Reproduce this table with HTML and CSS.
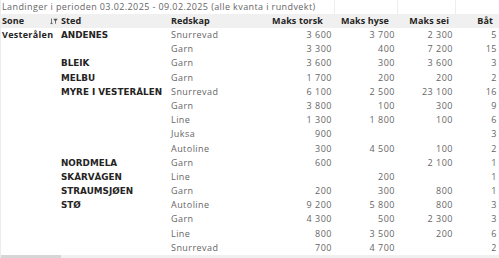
FILE: index.html
```html
<!DOCTYPE html>
<html lang="no">
<head>
<meta charset="utf-8">
<link rel="stylesheet" href="styles.css">
</head>
<body>
<div class="frame">
  <div class="grid title-row">
    <div class="title">Landinger i perioden 03.02.2025 - 09.02.2025 (alle kvanta i rundvekt)</div>
    <div class="tcell"></div>
    <div class="tcell"></div>
    <div class="tcell"></div>
  </div>
  <div class="grid head">
    <div class="h sone"><span>Sone</span>
      <svg class="filt" width="8" height="7" viewBox="0 0 8 7"><path d="M1.5 0.5v5.5M0.3 4.8l1.2 1.3 1.2-1.3" fill="none" stroke="#555" stroke-width="0.8"/><path d="M3.3 0.8h4.4L5.9 3.2v2.8L5.1 5.4V3.2z" fill="#555"/></svg>
    </div>
    <div class="h">Sted</div>
    <div class="h">Redskap</div>
    <div class="h num p-t">Maks torsk</div>
    <div class="h num p-h">Maks hyse</div>
    <div class="h num p-s">Maks sei</div>
    <div class="h num p-b">Båt</div>
  </div>
  <div class="grid body">
    <div class="z">Vesterålen</div><div class="s">ANDENES</div><div class="r">Snurrevad</div><div class="n">3 600</div><div class="n">3 700</div><div class="n">2 300</div><div class="n">5</div>
    <div></div><div></div><div class="r">Garn</div><div class="n">3 300</div><div class="n">400</div><div class="n">7 200</div><div class="n">15</div>
    <div></div><div class="s">BLEIK</div><div class="r">Garn</div><div class="n">3 600</div><div class="n">300</div><div class="n">3 600</div><div class="n">3</div>
    <div></div><div class="s">MELBU</div><div class="r">Garn</div><div class="n">1 700</div><div class="n">200</div><div class="n">200</div><div class="n">2</div>
    <div></div><div class="s">MYRE I VESTERÅLEN</div><div class="r">Snurrevad</div><div class="n">6 100</div><div class="n">2 500</div><div class="n">23 100</div><div class="n">16</div>
    <div></div><div></div><div class="r">Garn</div><div class="n">3 800</div><div class="n">100</div><div class="n">300</div><div class="n">9</div>
    <div></div><div></div><div class="r">Line</div><div class="n">1 300</div><div class="n">1 800</div><div class="n">100</div><div class="n">6</div>
    <div></div><div></div><div class="r">Juksa</div><div class="n">900</div><div class="n"></div><div class="n"></div><div class="n">3</div>
    <div></div><div></div><div class="r">Autoline</div><div class="n">300</div><div class="n">4 500</div><div class="n">100</div><div class="n">2</div>
    <div></div><div class="s">NORDMELA</div><div class="r">Garn</div><div class="n">600</div><div class="n"></div><div class="n">2 100</div><div class="n">1</div>
    <div></div><div class="s">SKÅRVÅGEN</div><div class="r">Line</div><div class="n"></div><div class="n">200</div><div class="n"></div><div class="n">1</div>
    <div></div><div class="s">STRAUMSJØEN</div><div class="r">Garn</div><div class="n">200</div><div class="n">300</div><div class="n">800</div><div class="n">1</div>
    <div></div><div class="s">STØ</div><div class="r">Autoline</div><div class="n">9 200</div><div class="n">5 800</div><div class="n">800</div><div class="n">3</div>
    <div></div><div></div><div class="r">Garn</div><div class="n">4 300</div><div class="n">500</div><div class="n">2 300</div><div class="n">3</div>
    <div></div><div></div><div class="r">Line</div><div class="n">800</div><div class="n">3 500</div><div class="n">200</div><div class="n">6</div>
    <div></div><div></div><div class="r">Snurrevad</div><div class="n">700</div><div class="n">4 700</div><div class="n"></div><div class="n">2</div>
  </div>
  <div class="scrollbar"><div class="thumb"></div></div>
</div>
</body>
</html>
```
FILE: styles.css
```css
html, body {
  margin: 0;
  padding: 0;
  background: #ffffff;
}
body {
  width: 499px;
  height: 258px;
  overflow: hidden;
  font-family: "Open Sans", "Liberation Sans", sans-serif;
  font-size: 9px;
  color: #605e5c;
}
.frame {
  position: relative;
  height: 258px;
  border-left: 1px solid #ececec;
  box-sizing: border-box;
}
.grid {
  display: grid;
  grid-template-columns: 58px 110px 100px 65px 63px 58px 44px;
}
.title-row {
  height: 14px;
}
.title {
  grid-column: 1 / span 4;
  line-height: 14px;
  padding-left: 1px;
  color: #666666;
  white-space: nowrap;
  letter-spacing: 0.4px;
}
.tcell {
  border-left: 1px solid #ededed;
}
.head {
  height: 14px;
  background: #f0f0f0;
}
.h {
  line-height: 14px;
  font-weight: 700;
  color: #252423;
  padding-left: 2px;
  white-space: nowrap;
  letter-spacing: 0.1px;
}
.sone {
  display: flex;
  align-items: center;
  justify-content: space-between;
  padding-left: 1px;
  padding-right: 1px;
}
.num {
  text-align: right;
  padding-left: 0;
}
.p-t { padding-right: 11px; }
.p-h { padding-right: 8px; }
.p-s { padding-right: 6px; }
.p-b { padding-right: 6px; }
.body {
  grid-auto-rows: 14.2px;
}
.body > div {
  line-height: 14.2px;
  white-space: nowrap;
}
.z {
  font-weight: 700;
  color: #252423;
  padding-left: 1px;
  letter-spacing: 0.3px;
}
.s {
  font-family: "DejaVu Sans", "Open Sans", sans-serif;
  font-size: 8.8px;
  font-weight: 700;
  color: #252423;
  padding-left: 2px;
}
.r {
  padding-left: 2px;
  color: #666666;
  letter-spacing: 0.45px;
}
.n {
  text-align: right;
  padding-right: 2px;
  color: #666666;
  letter-spacing: 0.5px;
}
.scrollbar {
  position: absolute;
  left: 0;
  right: 0;
  bottom: 0;
  height: 3px;
  background: #f0f0f0;
}
.thumb {
  width: 60px;
  height: 3px;
  background: #d6d6d6;
}
```
